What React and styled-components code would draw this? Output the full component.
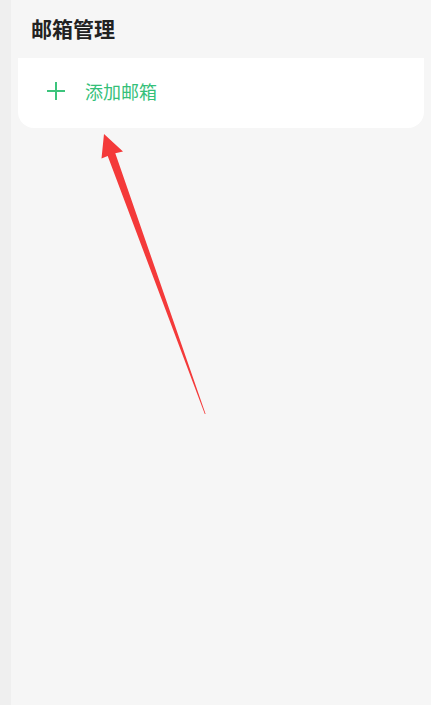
import { createGlobalStyle, styled } from 'styled-components';

const GlobalStyle = createGlobalStyle`
  html, body {
    margin: 0;
    padding: 0;
    height: 100%;
  }
  body {
    font-family: "Noto Sans CJK SC", "Noto Sans", sans-serif;
  }
  #root {
    height: 100%;
  }
`

const Page = styled.div`
  position: relative;
  display: flex;
  height: 100%;
  min-height: 705px;
  overflow: hidden;
`

const SideStrip = styled.div`
  width: 11px;
  flex-shrink: 0;
  background-color: #efefef;
`

const Main = styled.main`
  flex: 1;
  display: flex;
  flex-direction: column;
  padding: 0 7px;
  background-color: #f6f6f6;
`

const Title = styled.h1`
  margin: 0;
  height: 58px;
  display: flex;
  align-items: center;
  padding: 0 0 2px 13px;
  box-sizing: border-box;
  font-size: 21px;
  font-weight: 700;
  color: #222222;
`

const Card = styled.div`
  background-color: #ffffff;
  border-radius: 0 0 16px 16px;
`

const AddRow = styled.button`
  display: flex;
  align-items: center;
  gap: 19px;
  width: 100%;
  height: 70px;
  padding: 0 0 4px 28px;
  border: none;
  background: transparent;
  font-family: inherit;
  font-size: 18px;
  color: #35c079;
  cursor: pointer;
`

const Arrow = styled.svg`
  position: absolute;
  left: 0;
  top: 0;
  pointer-events: none;
`

function PlusIcon() {
  return (
    <svg width="20" height="20" viewBox="0 0 20 20">
      <path d="M10 1v18M1 10h18" stroke="#3cc47c" strokeWidth="2" />
    </svg>
  );
}

export default function App() {
  return (
    <>
      <GlobalStyle />
      <Page>
        <SideStrip />
        <Main>
          <Title>邮箱管理</Title>
          <Card>
            <AddRow type="button">
              <PlusIcon />
              添加邮箱
            </AddRow>
          </Card>
        </Main>
        <Arrow width="431" height="705" viewBox="0 0 431 705">
          <polygon
            points="104,134 123,151.5 115.3,153.3 205.6,414 204.8,414 107.7,156.1 101.5,158.5"
            fill="#f43a3a"
          />
        </Arrow>
      </Page>
    </>
  );
}
